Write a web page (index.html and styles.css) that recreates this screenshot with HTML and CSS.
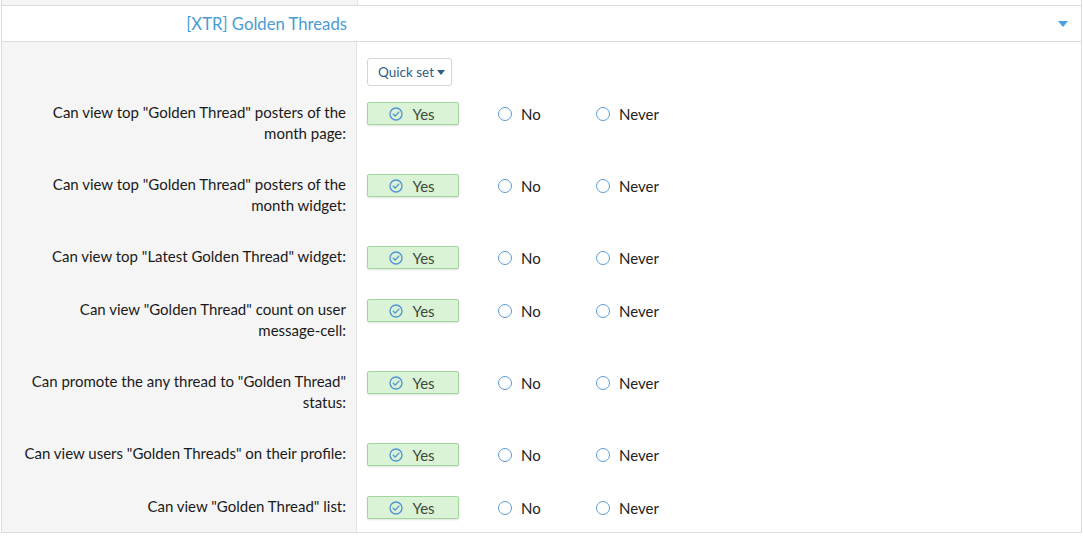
FILE: index.html
```html
<!DOCTYPE html>
<html>
<head>
<meta charset="utf-8">
<link rel="stylesheet" href="styles.css">
</head>
<body>
<div class="panel">
  <div class="prev">
    <div class="prev-left"></div>
    <div class="prev-right"></div>
  </div>
  <div class="head">
    <div class="head-title">[XTR] Golden Threads</div>
    <span class="head-caret"></span>
  </div>
  <div class="form">
    <div class="lab first"></div>
    <div class="ctl first">
      <button class="quick">Quick set<span class="qcaret"></span></button>
    </div>

    <div class="lab">Can view top "Golden Thread" posters of the month page:</div>
    <div class="ctl"><div class="opts">
      <span class="yes"><svg class="chk" viewBox="0 0 14 14"><circle cx="7" cy="7" r="6" /><path d="M4.2 7.2 L6.2 9.1 L9.9 5.1" /></svg>Yes</span>
      <span class="opt no"><i class="radio"></i>No</span>
      <span class="opt"><i class="radio"></i>Never</span>
    </div></div>

    <div class="lab">Can view top "Golden Thread" posters of the month widget:</div>
    <div class="ctl"><div class="opts">
      <span class="yes"><svg class="chk" viewBox="0 0 14 14"><circle cx="7" cy="7" r="6" /><path d="M4.2 7.2 L6.2 9.1 L9.9 5.1" /></svg>Yes</span>
      <span class="opt no"><i class="radio"></i>No</span>
      <span class="opt"><i class="radio"></i>Never</span>
    </div></div>

    <div class="lab">Can view top "Latest Golden Thread" widget:</div>
    <div class="ctl"><div class="opts">
      <span class="yes"><svg class="chk" viewBox="0 0 14 14"><circle cx="7" cy="7" r="6" /><path d="M4.2 7.2 L6.2 9.1 L9.9 5.1" /></svg>Yes</span>
      <span class="opt no"><i class="radio"></i>No</span>
      <span class="opt"><i class="radio"></i>Never</span>
    </div></div>

    <div class="lab">Can view "Golden Thread" count on user <span class="nw">message-cell:</span></div>
    <div class="ctl"><div class="opts">
      <span class="yes"><svg class="chk" viewBox="0 0 14 14"><circle cx="7" cy="7" r="6" /><path d="M4.2 7.2 L6.2 9.1 L9.9 5.1" /></svg>Yes</span>
      <span class="opt no"><i class="radio"></i>No</span>
      <span class="opt"><i class="radio"></i>Never</span>
    </div></div>

    <div class="lab">Can promote the any thread to "Golden Thread" status:</div>
    <div class="ctl"><div class="opts">
      <span class="yes"><svg class="chk" viewBox="0 0 14 14"><circle cx="7" cy="7" r="6" /><path d="M4.2 7.2 L6.2 9.1 L9.9 5.1" /></svg>Yes</span>
      <span class="opt no"><i class="radio"></i>No</span>
      <span class="opt"><i class="radio"></i>Never</span>
    </div></div>

    <div class="lab">Can view users "Golden Threads" on their profile:</div>
    <div class="ctl"><div class="opts">
      <span class="yes"><svg class="chk" viewBox="0 0 14 14"><circle cx="7" cy="7" r="6" /><path d="M4.2 7.2 L6.2 9.1 L9.9 5.1" /></svg>Yes</span>
      <span class="opt no"><i class="radio"></i>No</span>
      <span class="opt"><i class="radio"></i>Never</span>
    </div></div>

    <div class="lab last">Can view "Golden Thread" list:</div>
    <div class="ctl last"><div class="opts">
      <span class="yes"><svg class="chk" viewBox="0 0 14 14"><circle cx="7" cy="7" r="6" /><path d="M4.2 7.2 L6.2 9.1 L9.9 5.1" /></svg>Yes</span>
      <span class="opt no"><i class="radio"></i>No</span>
      <span class="opt"><i class="radio"></i>Never</span>
    </div></div>
  </div>
</div>
</body>
</html>
```

FILE: styles.css
```css
html, body {
  margin: 0;
  padding: 0;
  background: #fff;
}
body {
  font-family: Lato, "Noto Sans", sans-serif;
  color: #1a1a1a;
}
.panel {
  margin: 0 1px;
  border-left: 1px solid #dcdcdc;
  border-right: 1px solid #dcdcdc;
  border-bottom: 1px solid #dcdcdc;
}
.prev {
  display: flex;
  height: 5px;
  border-bottom: 1px solid #dcdcdc;
}
.prev-left {
  width: 355px;
  background: #f5f5f5;
  border-right: 1px solid #e2e2e2;
}
.prev-right {
  flex: 1;
}
.head {
  display: flex;
  align-items: center;
  height: 35px;
  border-bottom: 1px solid #dcdcdc;
}
.head-title {
  width: 345px;
  text-align: right;
  font-size: 16.7px;
  color: #4a9bd6;
  padding-right: 10px;
}
.head-caret {
  margin-left: auto;
  margin-right: 13px;
  width: 0;
  height: 0;
  border-left: 5px solid transparent;
  border-right: 5px solid transparent;
  border-top: 6px solid #47a0e6;
}
.form {
  display: grid;
  grid-template-columns: 355px 1fr;
}
.lab {
  background: #f5f5f5;
  border-right: 1px solid #e2e2e2;
  text-align: right;
  font-size: 15px;
  line-height: 21px;
  padding: 0 10px 30px 21px;
}
.nw {
  white-space: nowrap;
}
.ctl {
  padding: 0 0 30px 10px;
}
.lab.first, .ctl.first {
  padding-top: 16px;
  padding-bottom: 16px;
}
.lab.last, .ctl.last {
  padding-bottom: 13px;
}
.quick {
  display: flex;
  align-items: center;
  height: 28px;
  width: 85px;
  padding: 0 0 0 10px;
  border: 1px solid #d6d6d6;
  border-radius: 3px;
  background: #fff;
  font-family: Lato, "Noto Sans", sans-serif;
  font-size: 13.5px;
  color: #2f5d86;
}
.qcaret {
  margin-left: 3px;
  width: 0;
  height: 0;
  border-left: 4px solid transparent;
  border-right: 4px solid transparent;
  border-top: 5px solid #2f5d86;
}
.opts {
  display: flex;
  align-items: center;
  height: 23px;
  font-size: 15px;
}
.yes {
  display: flex;
  align-items: center;
  justify-content: center;
  box-sizing: border-box;
  width: 92px;
  height: 23px;
  background: #daf2d6;
  border: 1px solid #a3d69c;
  border-radius: 2px;
  box-shadow: 0 1px 2px rgba(0,0,0,0.12);
  color: #3d4a3a;
  padding-right: 2px;
}
.chk {
  width: 14px;
  height: 14px;
  margin-right: 9px;
  fill: none;
  stroke: #4f93d4;
  stroke-width: 1.3;
  stroke-linecap: round;
  stroke-linejoin: round;
}
.opt {
  display: flex;
  align-items: center;
  color: #222;
}
.opt.no {
  margin-left: 39px;
  width: 98px;
}
.radio {
  box-sizing: border-box;
  width: 14px;
  height: 14px;
  border: 1.5px solid #5a9bd8;
  border-radius: 50%;
  margin-right: 9px;
}
```
